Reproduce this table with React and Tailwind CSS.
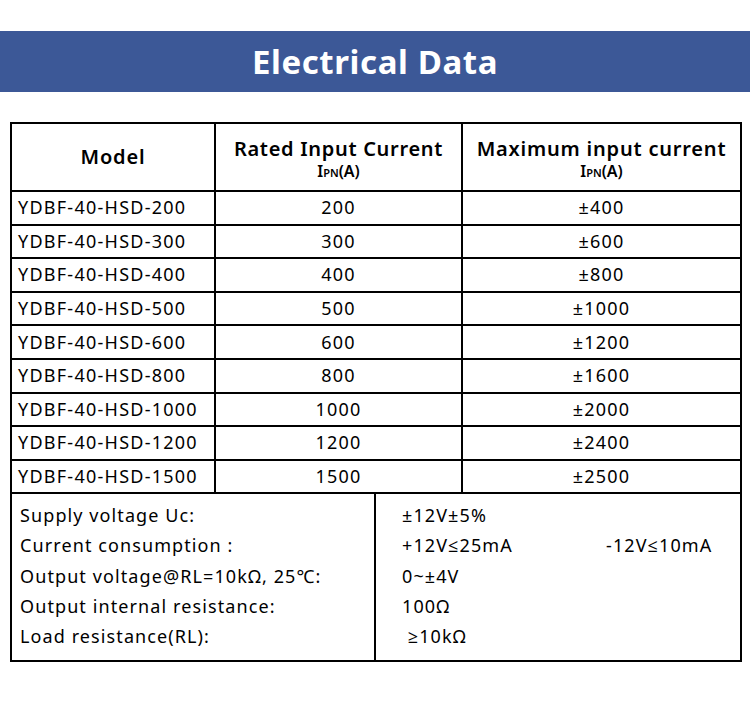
const rows = [
  ["YDBF-40-HSD-200", "200", "±400"],
  ["YDBF-40-HSD-300", "300", "±600"],
  ["YDBF-40-HSD-400", "400", "±800"],
  ["YDBF-40-HSD-500", "500", "±1000"],
  ["YDBF-40-HSD-600", "600", "±1200"],
  ["YDBF-40-HSD-800", "800", "±1600"],
  ["YDBF-40-HSD-1000", "1000", "±2000"],
  ["YDBF-40-HSD-1200", "1200", "±2400"],
  ["YDBF-40-HSD-1500", "1500", "±2500"],
];

const specs = [
  ["Supply voltage Uc:", "±12V±5%", ""],
  ["Current consumption :", "+12V≤25mA", "-12V≤10mA"],
  ["Output voltage@RL=10kΩ, 25℃:", "0~±4V", ""],
  ["Output internal resistance:", "100Ω", ""],
  ["Load resistance(RL):", " ≥10kΩ", ""],
];

// I with small "PN" subscript, as printed under the header labels
const Unit = () => (
  <div className="text-[16px] leading-none font-semibold mt-[2px] tracking-normal">
    I<span className="text-[11px]">PN</span>(A)
  </div>
);

export default function App() {
  return (
    <div className="w-[750px] h-[711px] bg-white pt-[31px] text-black" style={{ fontFamily: '"Noto Sans", "Open Sans", sans-serif' }}>
      <div className="h-[61px] bg-[#3c5897] flex items-center justify-center">
        <h1 className="text-white text-[33px] font-bold tracking-[0.6px]">Electrical Data</h1>
      </div>

      <div className="mx-[10px] mt-[30px] w-[732px] border-2 border-black">
        <table className="w-full border-collapse table-fixed text-[18px] tracking-[1.25px]">
          <colgroup>
            <col className="w-[203px]" />
            <col className="w-[247px]" />
            <col />
          </colgroup>
          <thead>
            <tr className="h-[67px]">
              <th className="border-r-2 border-b-2 border-black text-[20px] font-semibold tracking-[0.8px]">Model</th>
              <th className="border-r-2 border-b-2 border-black font-semibold">
                <div className="text-[20px] leading-tight tracking-[0.7px]">Rated Input Current</div>
                <Unit />
              </th>
              <th className="border-b-2 border-black font-semibold">
                <div className="text-[20px] leading-tight tracking-[0.8px]">Maximum input current</div>
                <Unit />
              </th>
            </tr>
          </thead>
          <tbody>
            {rows.map((r) => (
              <tr key={r[0]} className="h-[33.6px]">
                <td className="border-r-2 border-b-2 border-black pl-[6px] whitespace-nowrap">{r[0]}</td>
                <td className="border-r-2 border-b-2 border-black text-center">{r[1]}</td>
                <td className="border-b-2 border-black text-center">{r[2]}</td>
              </tr>
            ))}
          </tbody>
        </table>
        <div className="grid grid-cols-[364px_1fr] h-[166px] text-[18px] tracking-[1.1px]">
          <div className="border-r-2 border-black pl-[8px] pt-[6px] flex flex-col">
            {specs.map((s) => (
              <div key={s[0]} className="h-[30.3px] flex items-center whitespace-nowrap">{s[0]}</div>
            ))}
          </div>
          <div className="pl-[26px] pt-[6px] flex flex-col">
            {specs.map((s) => (
              <div key={s[0]} className="h-[30.3px] flex items-center whitespace-pre">
                <span className="w-[204px]">{s[1]}</span>
                <span>{s[2]}</span>
              </div>
            ))}
          </div>
        </div>
      </div>
    </div>
  );
}
